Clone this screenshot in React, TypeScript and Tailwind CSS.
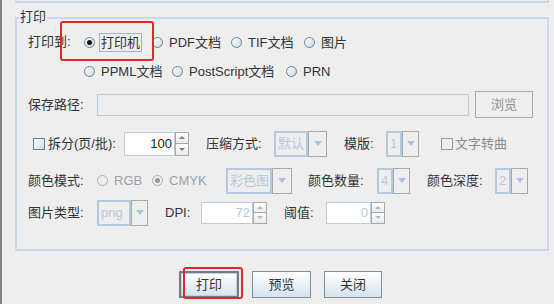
import React from "react"

function Radio({ checked = false, disabled = false }: { checked?: boolean; disabled?: boolean }) {
    return (
        <span
            className={
                "flex h-[11px] w-[11px] shrink-0 items-center justify-center rounded-full border " +
                (disabled
                    ? "border-[#a9b0b8] bg-[#eeeeee]"
                    : "border-[#6f7f92] bg-linear-to-br from-white to-[#c9d8e8]")
            }
        >
            {checked && (
                <span className={"h-[5px] w-[5px] rounded-full " + (disabled ? "bg-[#9a9a9a]" : "bg-[#111111]")} />
            )}
        </span>
    )
}

function RadioItem({ label, checked, disabled, focus, className }: {
    label: string; checked?: boolean; disabled?: boolean; focus?: boolean; className?: string
}) {
    return (
        <div className={"flex items-center " + (className ?? "")}>
            <Radio checked={checked} disabled={disabled} />
            <span
                className={
                    "ml-[4px] px-px leading-[17px] " +
                    (focus ? "border border-[#9fb3c8] " : "border border-transparent ") +
                    (disabled ? "text-[#9aa1a8]" : "text-[#333333]")
                }
            >
                {label}
            </span>
        </div>
    )
}

function Check({ disabled = false }: { disabled?: boolean }) {
    return (
        <span
            className={
                "h-[12px] w-[12px] shrink-0 border " +
                (disabled ? "border-[#9a9a9a] bg-[#eeeeee]" : "border-[#6f7f92] bg-linear-to-br from-white to-[#cbd9e8]")
            }
        />
    )
}

function Arrow({ size = "big", color = "#a9c3de" }: { size?: "big" | "small"; color?: string }) {
    return size === "big" ? (
        <span className="h-0 w-0 border-x-[4px] border-t-[5px] border-x-transparent" style={{ borderTopColor: color }} />
    ) : (
        <span className="h-0 w-0 border-x-[3px] border-t-[3px] border-x-transparent" style={{ borderTopColor: color }} />
    )
}

function Combo({ value, w, arrowW = 18 }: { value: string; w: string; arrowW?: number }) {
    return (
        <div className={"flex h-[26px] " + w}>
            <div className="flex min-w-0 flex-1 items-center border-2 border-[#b4c9e1] pl-[2px] text-[#b9c9da]">
                {value}
            </div>
            <div
                className="flex shrink-0 items-center justify-center border border-[#a8a8a8] bg-[#eeeeee]"
                style={{ width: arrowW }}
            >
                <Arrow />
            </div>
        </div>
    )
}

function Spinner({ value, w, active = false }: { value: string; w: string; active?: boolean }) {
    const tri = active ? "#7c7c7c" : "#b8b8b8"
    return (
        <div className={"flex " + (active ? "h-[24px] " : "h-[22px] ") + w}>
            <div
                className={
                    "flex min-w-0 flex-1 items-center justify-end border border-[#b9cde2] bg-white pr-[2px] " +
                    (active ? "text-[#222222]" : "text-[#b3c6da]")
                }
            >
                {value}
            </div>
            <div className="flex w-[14px] shrink-0 flex-col">
                <div className="flex flex-1 items-center justify-center border border-b-0 border-[#a9a9a9] bg-linear-to-b from-white to-[#e4ebf2]">
                    <span className="h-0 w-0 border-x-[3px] border-b-[3px] border-x-transparent" style={{ borderBottomColor: tri }} />
                </div>
                <div className="flex flex-1 items-center justify-center border border-[#a9a9a9] bg-linear-to-b from-white to-[#e4ebf2]">
                    <Arrow size="small" color={tri} />
                </div>
            </div>
        </div>
    )
}

function Button({ label, w, primary = false }: { label: string; w: string; primary?: boolean }) {
    return (
        <button
            className={
                "flex h-[27px] items-center justify-center bg-linear-to-b from-white to-[#d7e2ed] text-[#333333] " +
                (primary
                    ? "border-2 border-[#6f7d8b] shadow-[inset_0_0_0_1px_#c3cfdb] "
                    : "border border-[#7f8e9d] ") +
                w
            }
        >
            {label}
        </button>
    )
}

export default function App() {
    return (
        <div className="relative flex h-[304px] w-[554px] overflow-hidden bg-[#eeeeee] font-['Liberation_Sans','Noto_Sans_CJK_SC',sans-serif] text-[13px] text-[#333333]">
            <div className="w-[2px] shrink-0 bg-[#858585]" />
            <div className="flex flex-1 flex-col">
                {/* tail of the panel above */}
                <div className="ml-[13px] h-[3px] w-[534px] border-x-2 border-b-2 border-[#c9d8ea]" />

                <div className="relative ml-[13px] mt-[14px] w-[534px] border-2 border-[#c9d8ea] pb-[23px] pl-[11px] pt-[13px]">
                    <span className="absolute left-[2px] top-[-10px] bg-[#eeeeee] px-px leading-[16px]">打印</span>

                    {/* row 1 */}
                    <div className="flex h-[20px] items-center">
                        <span className="w-[56px] shrink-0">打印到:</span>
                        <RadioItem label="打印机" checked focus className="w-[68px]" />
                        <RadioItem label="PDF文档" className="w-[79px]" />
                        <RadioItem label="TIF文档" className="w-[73px]" />
                        <RadioItem label="图片" />
                    </div>

                    {/* row 2 */}
                    <div className="mt-[9px] flex h-[20px] items-center pl-[56px]">
                        <RadioItem label="PPML文档" className="w-[88px]" />
                        <RadioItem label="PostScript文档" className="w-[114px]" />
                        <RadioItem label="PRN" />
                    </div>

                    {/* row 3 */}
                    <div className="mt-[10px] flex h-[27px] items-center">
                        <span className="w-[69px] shrink-0">保存路径:</span>
                        <div className="h-[22px] w-[372px] border border-[#b9cde2] bg-[#eeeeee]" />
                        <button className="ml-[6px] flex h-[27px] w-[58px] items-center justify-center border border-[#a9a9a9] bg-[#eeeeee] text-[#8e8e8e]">
                            浏览
                        </button>
                    </div>

                    {/* row 4 */}
                    <div className="mt-[12px] flex h-[27px] items-center">
                        <div className="ml-[5px] flex w-[91px] shrink-0 items-center">
                            <Check />
                            <span className="ml-[3px]">拆分(页/批):</span>
                        </div>
                        <Spinner value="100" w="w-[65px]" active />
                        <span className="ml-[17px] w-[68px] shrink-0">压缩方式:</span>
                        <Combo value="默认" w="w-[53px]" arrowW={19} />
                        <span className="ml-[17px] w-[42px] shrink-0">模版:</span>
                        <Combo value="1" w="w-[33px]" arrowW={17} />
                        <div className="ml-[22px] flex items-center text-[#8c8c8c]">
                            <Check disabled />
                            <span className="ml-[2px]">文字转曲</span>
                        </div>
                    </div>

                    {/* row 5 */}
                    <div className="mt-[10px] flex h-[27px] items-center">
                        <span className="w-[69px] shrink-0">颜色模式:</span>
                        <RadioItem label="RGB" disabled className="w-[55px]" />
                        <RadioItem label="CMYK" checked disabled className="w-[74px]" />
                        <Combo value="彩色图" w="w-[66px]" arrowW={20} />
                        <span className="ml-[16px] w-[69px] shrink-0">颜色数量:</span>
                        <Combo value="4" w="w-[33px]" arrowW={17} />
                        <span className="ml-[17px] w-[68px] shrink-0">颜色深度:</span>
                        <Combo value="2" w="w-[33px]" arrowW={17} />
                    </div>

                    {/* row 6 */}
                    <div className="mt-[5px] flex h-[27px] items-center">
                        <span className="w-[69px] shrink-0">图片类型:</span>
                        <Combo value="png" w="w-[51px]" arrowW={17} />
                        <span className="ml-[17px] w-[36px] shrink-0">DPI:</span>
                        <Spinner value="72" w="w-[66px]" />
                        <span className="ml-[17px] w-[42px] shrink-0">阈值:</span>
                        <Spinner value="0" w="w-[59px]" />
                    </div>
                </div>

                {/* buttons */}
                <div className="mt-[20px] flex items-center gap-[13px] pl-[177px]">
                    <Button label="打印" w="w-[60px]" primary />
                    <Button label="预览" w="w-[59px]" />
                    <Button label="关闭" w="w-[58px]" />
                </div>
            </div>

            {/* red annotation boxes */}
            <div className="pointer-events-none absolute left-[60px] top-[21px] h-[40px] w-[94px] rounded-[3px] border-2 border-[#e3262b]" />
            <div className="pointer-events-none absolute left-[183px] top-[267px] h-[32px] w-[60px] rounded-[3px] border-2 border-[#e3262b]" />
        </div>
    )
}
